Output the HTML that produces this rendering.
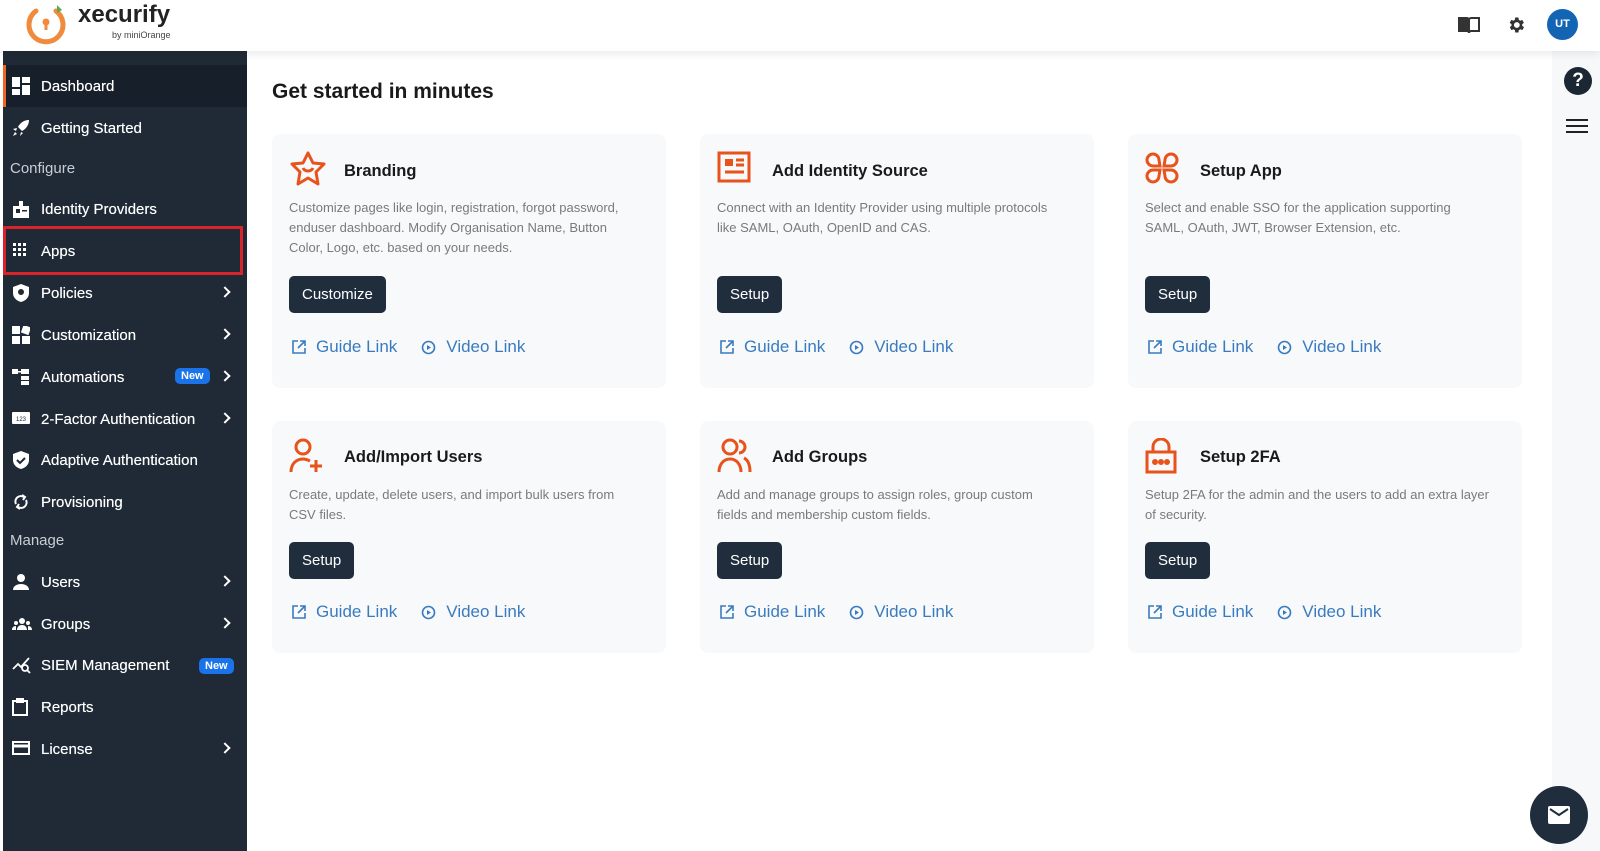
<!DOCTYPE html>
<html><head><meta charset="utf-8"><style>
*{box-sizing:border-box;margin:0;padding:0}
body{width:1600px;height:851px;overflow:hidden;background:#fff;font-family:"Liberation Sans",sans-serif;position:relative}
.hdr{position:absolute;left:0;top:0;width:1600px;height:51px;background:#fff;box-shadow:0 3px 8px rgba(0,0,0,.08);z-index:3}
.side{position:absolute;left:3px;top:51px;width:244px;height:800px;background:#1f2a36}
.it{position:absolute;left:0;width:244px;height:42px;color:#fff;font-size:15px;display:flex;align-items:center;padding-left:38px;text-shadow:0 0 .4px #fff}
.it svg{position:absolute;left:9px;top:12px}
.sec{position:absolute;left:7px;color:#c9ced4;font-size:15px}
.chev{position:absolute;right:18px;top:16px;width:8px;height:8px;border-right:2px solid #fff;border-top:2px solid #fff;transform:rotate(45deg)}
.new{position:absolute;background:#1a73e8;color:#fff;font-size:11px;font-weight:bold;border-radius:5px;padding:2px 6px;text-shadow:none}
.strip{position:absolute;left:1552px;top:51px;width:48px;height:800px;background:#f6f8fa}
.card{position:absolute;width:394px;background:#f7f9fb;border-radius:8px}
.card .ic{position:absolute;left:17px;top:17px}
.card h3{position:absolute;left:72px;font-size:16.5px;font-weight:600;color:#1a1a1a}
.card p{position:absolute;left:17px;width:348px;font-size:13px;line-height:20px;color:#7a7a7a}
.btn{position:absolute;left:17px;height:37px;background:#1f2d3d;color:#fff;font-size:15px;border-radius:5px;padding:0 13px;line-height:37px}
.lk{position:absolute;left:20px;color:#3a7bbf;font-size:17px;display:flex;align-items:center}
.lk svg{margin-right:10px}
.lk span{margin-right:24px}
</style></head><body>
<div class="hdr">
<svg style="position:absolute;left:26px;top:3px" width="44" height="42" viewBox="0 0 44 42"><path d="M30 8 A17 17 0 1 1 10 8" fill="none" stroke="#f08a3c" stroke-width="5" stroke-linecap="round"/><circle cx="20" cy="19" r="3.5" fill="#f08a3c"/><rect x="18.5" y="19" width="3" height="8" fill="#f08a3c"/><path d="M31 2 l5 5 l-5 3z" fill="#5aa85a"/></svg>
<div style="position:absolute;left:78px;top:1px;font-size:24px;font-weight:bold;color:#222">xecurify</div>
<div style="position:absolute;left:112px;top:30px;font-size:9px;color:#444">by miniOrange</div>
<svg style="position:absolute;left:1458px;top:16px" width="22" height="18" viewBox="0 0 22 18"><path d="M1 2h8c1 0 2 1 2 2v13c0-1-1-2-2-2H1z M21 2h-8c-1 0-2 1-2 2v13c0-1 1-2 2-2h8z" fill="none" stroke="#333" stroke-width="2"/><path d="M2 3h8v12H2z" fill="#333"/></svg>
<svg style="position:absolute;left:1506px;top:15px" width="20" height="20" viewBox="0 0 24 24"><path fill="#333" d="M19.4 13a7.5 7.5 0 000-2l2.1-1.6-2-3.5-2.5 1a7 7 0 00-1.7-1L15 3h-4l-.4 2.9a7 7 0 00-1.7 1l-2.5-1-2 3.5L6.6 11a7.5 7.5 0 000 2l-2.1 1.6 2 3.5 2.5-1a7 7 0 001.7 1L11 21h4l.4-2.9a7 7 0 001.7-1l2.5 1 2-3.5zM13 15.5a3.5 3.5 0 110-7 3.5 3.5 0 010 7z"/></svg>
<div style="position:absolute;left:1547px;top:9px;width:31px;height:31px;border-radius:50%;background:#1464b4;color:#fff;font-size:11px;font-weight:bold;text-align:center;line-height:31px">UT</div>
</div>
<div class="side">
<div class="it" style="top:14px;background:#17202a;border-left:3px solid #f06424;padding-left:35px"><svg width="18" height="18" style="left:6px" viewBox="0 0 18 18" fill="#fff"><rect x="0" y="0" width="8" height="10"/><rect x="10" y="0" width="8" height="6"/><rect x="0" y="12" width="8" height="6"/><rect x="10" y="8" width="8" height="10"/></svg>Dashboard</div>
<div class="it" style="top:56px"><svg width="18" height="18" viewBox="0 0 18 18" fill="#fff"><path d="M17 1c-5 0-9 3-11 7l4 4c4-2 7-6 7-11zM5 9l-4 1 3 2zM9 13l-1 4 3-3zM3 13l-2 4 4-2z"/></svg>Getting Started</div>
<div class="sec" style="top:109px">Configure</div>
<div class="it" style="top:137px"><svg width="18" height="18" viewBox="0 0 18 18" fill="#fff"><path d="M1 6h16v12H1z"/><rect x="7" y="1" width="4" height="6"/><rect x="4" y="9" width="4" height="4" fill="#1f2a36"/><rect x="10" y="10" width="5" height="1.5" fill="#1f2a36"/></svg>Identity Providers</div>
<div class="it" style="top:179px"><svg width="16" height="16" viewBox="0 0 16 16" fill="#fff"><rect x="1" y="1" width="3" height="3"/><rect x="6" y="1" width="3" height="3"/><rect x="11" y="1" width="3" height="3"/><rect x="1" y="6" width="3" height="3"/><rect x="6" y="6" width="3" height="3"/><rect x="11" y="6" width="3" height="3"/><rect x="1" y="11" width="3" height="3"/><rect x="6" y="11" width="3" height="3"/><rect x="11" y="11" width="3" height="3"/></svg>Apps</div>
<div style="position:absolute;left:0;top:175px;width:240px;height:49px;border:3px solid #d8232a"></div>
<div class="it" style="top:221px"><svg width="18" height="18" viewBox="0 0 18 18" fill="#fff"><path d="M9 0l8 3v6c0 5-4 8-8 9-4-1-8-4-8-9V3z"/><circle cx="9" cy="8" r="3" fill="#1f2a36"/></svg>Policies<div class="chev"></div></div>
<div class="it" style="top:263px"><svg width="18" height="18" viewBox="0 0 18 18" fill="#fff"><rect x="0" y="0" width="8" height="8"/><rect x="10" y="0" width="8" height="8" transform="rotate(20 14 4)"/><rect x="0" y="10" width="8" height="8"/><rect x="10" y="10" width="8" height="8"/></svg>Customization<div class="chev"></div></div>
<div class="it" style="top:305px"><svg width="18" height="18" viewBox="0 0 18 18" fill="#fff"><rect x="0" y="1" width="6" height="5"/><rect x="9" y="1" width="8" height="5"/><rect x="9" y="8" width="8" height="4"/><rect x="9" y="13" width="8" height="4"/><rect x="6" y="3" width="3" height="1.5"/></svg>Automations<div class="new" style="left:172px;top:12px">New</div><div class="chev"></div></div>
<div class="it" style="top:347px"><svg width="18" height="16" viewBox="0 0 18 16"><rect x="0" y="2" width="18" height="12" rx="1" fill="#fff"/><text x="9" y="11" font-size="6" text-anchor="middle" fill="#1f2a36" font-family="Liberation Sans">123</text></svg>2-Factor Authentication<div class="chev"></div></div>
<div class="it" style="top:388px"><svg width="18" height="18" viewBox="0 0 18 18"><path d="M9 0l8 3v6c0 5-4 8-8 9-4-1-8-4-8-9V3z" fill="#fff"/><path d="M5 9l3 3 5-5" stroke="#1f2a36" stroke-width="2" fill="none"/></svg>Adaptive Authentication</div>
<div class="it" style="top:430px"><svg width="18" height="18" viewBox="0 0 18 18" fill="none" stroke="#fff" stroke-width="2"><path d="M4 11a5.5 5.5 0 018-7M14 7a5.5 5.5 0 01-8 7"/><path d="M10 2l3 2-2 3M8 16l-3-2 2-3"/></svg>Provisioning</div>
<div class="sec" style="top:481px">Manage</div>
<div class="it" style="top:510px"><svg width="18" height="18" viewBox="0 0 18 18" fill="#fff"><circle cx="9" cy="5" r="4"/><path d="M1 17c0-4 4-6 8-6s8 2 8 6z"/></svg>Users<div class="chev"></div></div>
<div class="it" style="top:552px"><svg width="20" height="18" viewBox="0 0 20 18" fill="#fff"><circle cx="10" cy="6" r="3"/><circle cx="4" cy="8" r="2"/><circle cx="16" cy="8" r="2"/><path d="M5 15c0-3 2-5 5-5s5 2 5 5z M0 15c0-2 1-4 4-4v4z M20 15c0-2-1-4-4-4v4z"/></svg>Groups<div class="chev"></div></div>
<div class="it" style="top:593px"><svg width="20" height="18" viewBox="0 0 20 18" fill="none" stroke="#fff" stroke-width="1.8"><path d="M1 13l5-5 3 3 8-9"/><circle cx="13" cy="12" r="3"/><path d="M15 14l3 3"/></svg>SIEM Management<div class="new" style="left:196px;top:14px">New</div></div>
<div class="it" style="top:635px"><svg width="16" height="18" viewBox="0 0 16 18" fill="none" stroke="#fff" stroke-width="2"><rect x="1" y="3" width="14" height="14"/><rect x="5" y="1" width="6" height="3" fill="#fff"/></svg>Reports</div>
<div class="it" style="top:677px"><svg width="18" height="16" viewBox="0 0 18 16" fill="none" stroke="#fff" stroke-width="2"><rect x="1" y="2" width="16" height="12"/><path d="M1 6h16" stroke-width="3"/></svg>License<div class="chev"></div></div>
</div>
<div class="strip"></div>
<div style="position:absolute;left:1564px;top:67px;width:28px;height:28px;border-radius:50%;background:#1b2733;color:#fff;font-weight:bold;font-size:19px;text-align:center;line-height:28px">?</div>
<div style="position:absolute;left:1566px;top:119px;width:22px;height:14px;border-top:2.5px solid #222;border-bottom:2.5px solid #222"><div style="margin-top:3.5px;border-top:2.5px solid #222"></div></div>
<div style="position:absolute;left:1530px;top:786px;width:58px;height:58px;border-radius:50%;background:#1f2d3d"><svg style="position:absolute;left:18px;top:20px" width="22" height="18" viewBox="0 0 22 18"><rect x="0" y="0" width="22" height="18" rx="2" fill="#fff"/><path d="M2 3l9 6 9-6" stroke="#1f2d3d" stroke-width="2" fill="none"/></svg></div>
<div style="position:absolute;left:272px;top:80px;font-size:21px;font-weight:600;color:#1a1a1a">Get started in minutes</div>

<!-- row 1 -->
<div class="card" style="left:272px;top:134px;height:254px">
<svg class="ic" width="38" height="36" viewBox="0 0 38 36" fill="none" stroke="#e8531c" stroke-width="3"><path d="M19 2l5 10 11 1-8 8 2 12-10-6-10 6 2-12-8-8 11-1z" stroke-linejoin="round"/><path d="M14 17c2 4 8 4 10 0"/></svg>
<h3 style="top:28px">Branding</h3>
<p style="top:64px">Customize pages like login, registration, forgot password, enduser dashboard. Modify Organisation Name, Button Color, Logo, etc. based on your needs.</p>
<div class="btn" style="top:142px">Customize</div>
<div class="lk" style="top:203px"><svg width="14" height="14" viewBox="0 0 14 14" fill="none" stroke="#3a7bbf" stroke-width="1.6"><path d="M6 1H1v12h12V8M8 1h5v5M13 1L6 8"/></svg><span>Guide Link</span><svg width="15" height="15" viewBox="0 0 15 15"><circle cx="7.5" cy="7.5" r="6" fill="none" stroke="#3a7bbf" stroke-width="1.6"/><path d="M6 5l4 2.5L6 10z" fill="#3a7bbf"/></svg><span>Video Link</span></div>
</div>
<div class="card" style="left:700px;top:134px;height:254px">
<svg class="ic" width="34" height="32" viewBox="0 0 34 32" fill="none" stroke="#e8531c" stroke-width="3"><rect x="2" y="2" width="30" height="28"/><rect x="8" y="8" width="8" height="7" fill="#e8531c" stroke="none"/><path d="M19 9h8M19 14h8M8 21h19"/></svg>
<h3 style="top:28px">Add Identity Source</h3>
<p style="top:64px">Connect with an Identity Provider using multiple protocols like SAML, OAuth, OpenID and CAS.</p>
<div class="btn" style="top:142px">Setup</div>
<div class="lk" style="top:203px"><svg width="14" height="14" viewBox="0 0 14 14" fill="none" stroke="#3a7bbf" stroke-width="1.6"><path d="M6 1H1v12h12V8M8 1h5v5M13 1L6 8"/></svg><span>Guide Link</span><svg width="15" height="15" viewBox="0 0 15 15"><circle cx="7.5" cy="7.5" r="6" fill="none" stroke="#3a7bbf" stroke-width="1.6"/><path d="M6 5l4 2.5L6 10z" fill="#3a7bbf"/></svg><span>Video Link</span></div>
</div>
<div class="card" style="left:1128px;top:134px;height:254px">
<svg class="ic" width="34" height="34" viewBox="0 0 34 34" fill="none" stroke="#e8531c" stroke-width="3"><path d="M15 15H8a6 6 0 116-6zM19 15h7a6 6 0 10-6-6zM15 19H8a6 6 0 106 6zM19 19h7a6 6 0 11-6 6z"/></svg>
<h3 style="top:28px">Setup App</h3>
<p style="top:64px">Select and enable SSO for the application supporting SAML, OAuth, JWT, Browser Extension, etc.</p>
<div class="btn" style="top:142px">Setup</div>
<div class="lk" style="top:203px"><svg width="14" height="14" viewBox="0 0 14 14" fill="none" stroke="#3a7bbf" stroke-width="1.6"><path d="M6 1H1v12h12V8M8 1h5v5M13 1L6 8"/></svg><span>Guide Link</span><svg width="15" height="15" viewBox="0 0 15 15"><circle cx="7.5" cy="7.5" r="6" fill="none" stroke="#3a7bbf" stroke-width="1.6"/><path d="M6 5l4 2.5L6 10z" fill="#3a7bbf"/></svg><span>Video Link</span></div>
</div>
<!-- row 2 -->
<div class="card" style="left:272px;top:421px;height:232px">
<svg class="ic" width="36" height="36" viewBox="0 0 36 36" fill="none" stroke="#e8531c" stroke-width="3"><circle cx="14" cy="9" r="7"/><path d="M2 34c0-8 5-13 12-13 3 0 5 1 7 2M27 22v12M21 28h12"/></svg>
<h3 style="top:27px">Add/Import Users</h3>
<p style="top:64px">Create, update, delete users, and import bulk users from CSV files.</p>
<div class="btn" style="top:121px">Setup</div>
<div class="lk" style="top:181px"><svg width="14" height="14" viewBox="0 0 14 14" fill="none" stroke="#3a7bbf" stroke-width="1.6"><path d="M6 1H1v12h12V8M8 1h5v5M13 1L6 8"/></svg><span>Guide Link</span><svg width="15" height="15" viewBox="0 0 15 15"><circle cx="7.5" cy="7.5" r="6" fill="none" stroke="#3a7bbf" stroke-width="1.6"/><path d="M6 5l4 2.5L6 10z" fill="#3a7bbf"/></svg><span>Video Link</span></div>
</div>
<div class="card" style="left:700px;top:421px;height:232px">
<svg class="ic" width="36" height="36" viewBox="0 0 36 36" fill="none" stroke="#e8531c" stroke-width="3"><circle cx="13" cy="9" r="7"/><path d="M2 34c0-8 5-13 11-13s11 5 11 13M22 3a6 6 0 010 12M27 20c4 2 6 7 6 14"/></svg>
<h3 style="top:27px">Add Groups</h3>
<p style="top:64px">Add and manage groups to assign roles, group custom fields and membership custom fields.</p>
<div class="btn" style="top:121px">Setup</div>
<div class="lk" style="top:181px"><svg width="14" height="14" viewBox="0 0 14 14" fill="none" stroke="#3a7bbf" stroke-width="1.6"><path d="M6 1H1v12h12V8M8 1h5v5M13 1L6 8"/></svg><span>Guide Link</span><svg width="15" height="15" viewBox="0 0 15 15"><circle cx="7.5" cy="7.5" r="6" fill="none" stroke="#3a7bbf" stroke-width="1.6"/><path d="M6 5l4 2.5L6 10z" fill="#3a7bbf"/></svg><span>Video Link</span></div>
</div>
<div class="card" style="left:1128px;top:421px;height:232px">
<svg class="ic" width="32" height="36" viewBox="0 0 32 36" fill="none" stroke="#e8531c" stroke-width="3"><path d="M8 14V9a8 8 0 0116 0v5"/><rect x="2" y="14" width="28" height="20"/><circle cx="10" cy="24" r="1.5" fill="#e8531c"/><circle cx="16" cy="24" r="1.5" fill="#e8531c"/><circle cx="22" cy="24" r="1.5" fill="#e8531c"/></svg>
<h3 style="top:27px">Setup 2FA</h3>
<p style="top:64px">Setup 2FA for the admin and the users to add an extra layer of security.</p>
<div class="btn" style="top:121px">Setup</div>
<div class="lk" style="top:181px"><svg width="14" height="14" viewBox="0 0 14 14" fill="none" stroke="#3a7bbf" stroke-width="1.6"><path d="M6 1H1v12h12V8M8 1h5v5M13 1L6 8"/></svg><span>Guide Link</span><svg width="15" height="15" viewBox="0 0 15 15"><circle cx="7.5" cy="7.5" r="6" fill="none" stroke="#3a7bbf" stroke-width="1.6"/><path d="M6 5l4 2.5L6 10z" fill="#3a7bbf"/></svg><span>Video Link</span></div>
</div>
</body></html>
